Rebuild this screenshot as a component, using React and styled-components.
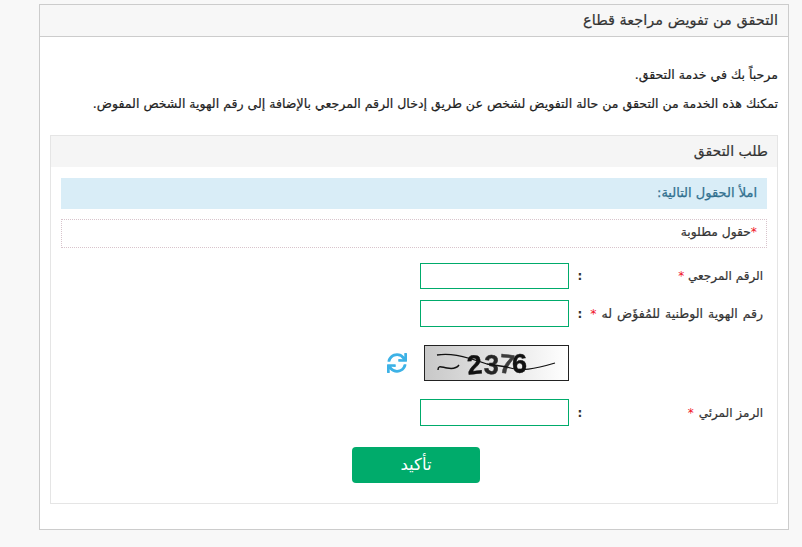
import React from "react";
import styled, { createGlobalStyle } from "styled-components";
import { FaSync } from "react-icons/fa";

const Global = createGlobalStyle`
  html, body { margin: 0; padding: 0; background: #f8f8f8; }
  body { font-family: "DejaVu Sans", "Noto Sans", sans-serif; color: #333; }
  * { box-sizing: border-box; }
`;

const Page = styled.div`
  width: 802px;
  height: 547px;
  overflow: hidden;
  padding: 4px 13px 0 39px;
  direction: rtl;
`;

const Panel = styled.section`
  height: 526px;
  background: #fff;
  border: 1px solid #ccc;
`;

const PanelHeader = styled.h1`
  margin: 0;
  height: 32px;
  padding: 0 10px 0 0;
  background: #f7f7f7;
  border-bottom: 1px solid #ccc;
  font-size: 14.5px;
  font-weight: 400;
  line-height: 30px;
  color: #333;
  -webkit-text-stroke: 0.2px #333;
`;

const PanelBody = styled.div`
  padding: 28px 10px 0 10px;
`;

const Intro = styled.p`
  margin: 0 0 ${(p) => p.$gap}px;
  height: 20px;
  font-size: 12.55px;
  line-height: 20px;
  color: #222;
  -webkit-text-stroke: 0.2px #222;
  white-space: nowrap;
`;

const Card = styled.section`
  margin-top: 21px;
  height: 369px;
  border: 1px solid #e5e5e5;
`;

const CardHeader = styled.h2`
  margin: 0;
  height: 31px;
  padding: 0 9px 0 0;
  background: #f5f5f5;
  font-size: 14px;
  font-weight: 400;
  line-height: 30px;
  color: #333;
  -webkit-text-stroke: 0.2px #333;
`;

const CardBody = styled.div`
  padding: 11px 10px 0;
`;

const Notice = styled.div`
  height: 31px;
  padding-right: 10px;
  background: #d9edf7;
  color: #31708f;
  font-size: 13px;
  line-height: 29px;
  -webkit-text-stroke: 0.25px #31708f;
`;

const Required = styled.div`
  margin-top: 10px;
  height: 29px;
  padding-right: 9px;
  border: 1px dotted #d8c4cc;
  font-size: 12.3px;
  line-height: 25px;
  color: #333;
  -webkit-text-stroke: 0.2px #333;
`;

const Star = styled.span`
  color: #f01226;
  -webkit-text-stroke: 0;
  margin: ${(p) => p.$margin || "0"};
`;

const Form = styled.div`
  margin-top: 15px;
  display: flex;
  flex-direction: column;
`;

const Row = styled.div`
  display: grid;
  grid-template-columns: 172px 22px 149px;
  align-items: center;
  margin-bottom: ${(p) => p.$gap}px;
  padding-right: 4px;
`;

const Label = styled.label`
  font-size: ${(p) => p.$size || 12}px;
  word-spacing: ${(p) => p.$spread || 0}px;
  color: #333;
  -webkit-text-stroke: 0.2px #333;
  white-space: nowrap;
`;

const Colon = styled.span`
  font-size: 12px;
  font-weight: 700;
  color: #333;
  text-align: center;
`;

const Field = styled.input`
  width: 149px;
  height: ${(p) => p.$h}px;
  border: 1px solid #00ab6b;
  background: #fff;
  outline: none;
  padding: 0;
`;

const CaptchaRow = styled.div`
  display: flex;
  align-items: center;
  height: 36px;
  margin: 0 198px 18px 0;
`;

const Captcha = styled.div`
  width: 145px;
  height: 36px;
  border: 1px solid #222;
  background: linear-gradient(90deg, #c8c8c8, #ffffff);
  overflow: hidden;
  direction: ltr;
`;

const CaptchaArt = styled.svg`
  display: block;
  width: 143px;
  height: 34px;
`;

const Digits = styled.g`
  font-family: "Liberation Sans", sans-serif;
  font-size: 27px;
  font-weight: 700;
  fill: #111;
  stroke: #111;
  stroke-width: 0.4px;
  filter: blur(0.7px);
`;

const Refresh = styled.button`
  display: flex;
  width: 22px;
  height: 22px;
  margin-right: 16px;
  padding: 0;
  border: 0;
  background: none;
  color: #3db2e6;
  font-size: 20px;
  align-items: center;
  justify-content: center;
`;

const Submit = styled.button`
  display: block;
  width: 128px;
  height: 36px;
  margin: 21px 287px 0 0;
  border: 0;
  border-radius: 4px;
  background: #00ab6b;
  color: #fff;
  font-family: inherit;
  font-size: 16.5px;
  line-height: 30px;
  padding: 0;
`;

export default function App() {
  return (
    <Page>
      <Global />
      <Panel>
        <PanelHeader>التحقق من تفويض مراجعة قطاع</PanelHeader>
        <PanelBody>
          <Intro $gap={9}>مرحباً بك في خدمة التحقق.</Intro>
          <Intro $gap={0}>
            تمكنك هذه الخدمة من التحقق من حالة التفويض لشخص عن طريق إدخال الرقم المرجعي بالإضافة إلى رقم الهوية الشخص المفوض.
          </Intro>
          <Card>
            <CardHeader>طلب التحقق</CardHeader>
            <CardBody>
              <Notice>املأ الحقول التالية:</Notice>
              <Required>
                <Star>*</Star>حقول مطلوبة
              </Required>
              <Form>
                <Row $gap={11}>
                  <Label>
                    الرقم المرجعي <Star>*</Star>
                  </Label>
                  <Colon>:</Colon>
                  <Field $h={26} aria-label="الرقم المرجعي" />
                </Row>
                <Row $gap={18}>
                  <Label $size={12.5} $spread={1}>
                    رقم الهوية الوطنية للمُفؤَض له <Star>*</Star>
                  </Label>
                  <Colon>:</Colon>
                  <Field $h={27} aria-label="رقم الهوية" />
                </Row>
                <CaptchaRow>
                  <Captcha>
                    <CaptchaArt viewBox="0 0 143 34">
                      <Digits>
                        <text x="42" y="28" transform="rotate(-6 50 20)">2</text>
                        <text x="59" y="28" transform="rotate(3 66 20)" opacity="0.9">3</text>
                        <text x="74" y="27" transform="rotate(7 80 20)" opacity="0.8">7</text>
                        <text x="87" y="27">6</text>
                      </Digits>
                      <path d="M12 9 C24 7 36 9 62 18 L82 21 C95 26 110 23 130 17" fill="none" stroke="#111" strokeWidth="1.3" />
                      <path d="M13 24 C13 19 16 21 22 22 C27 23 31 23 34 19" fill="none" stroke="#111" strokeWidth="1.5" />
                    </CaptchaArt>
                  </Captcha>
                  <Refresh aria-label="تحديث">
                    <FaSync />
                  </Refresh>
                </CaptchaRow>
                <Row $gap={0}>
                  <Label>
                    الرمز المرئي <Star $margin="0 1px 0 0">*</Star>
                  </Label>
                  <Colon>:</Colon>
                  <Field $h={27} aria-label="الرمز المرئي" />
                </Row>
              </Form>
              <Submit>تأكيد</Submit>
            </CardBody>
          </Card>
        </PanelBody>
      </Panel>
    </Page>
  );
}
